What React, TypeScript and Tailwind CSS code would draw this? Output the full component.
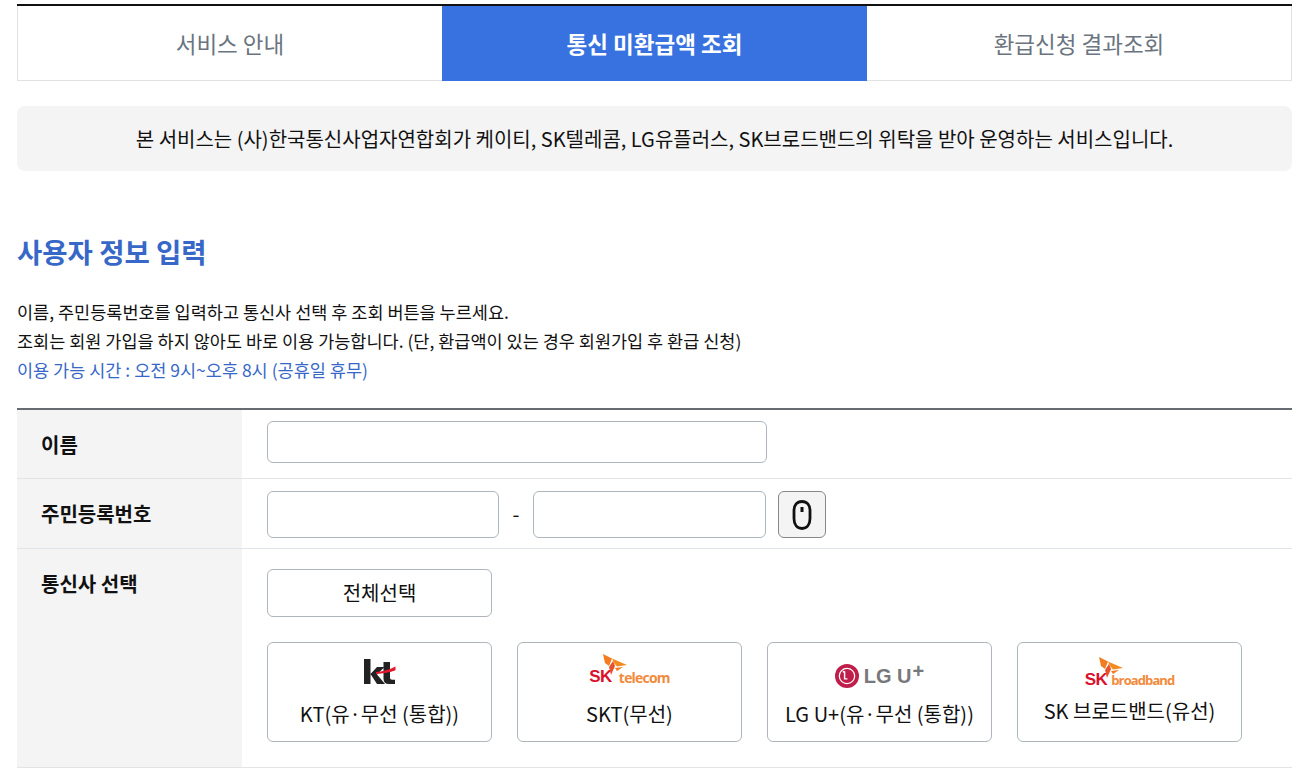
import React from 'react';

const font = { fontFamily: "'Noto Sans CJK KR', 'Noto Sans', sans-serif" };
const logoFont = { fontFamily: "'Liberation Sans', sans-serif" };

function MouseIcon() {
  return (
    <svg width="20" height="30" viewBox="0 0 20 30" fill="none" stroke="#111" strokeWidth="2.8">
      <path d="M10 1.500c5 0 8 3.600 8 9v8c0 6-3 10-8 10s-8-4-8-10v-8c0-5.400 3-9 8-9z" />
      <line x1="10" y1="7" x2="10" y2="12" strokeWidth="3" />
    </svg>
  );
}

function KtLogo() {
  return (
    <svg width="33" height="28" viewBox="0 0 33 28">
      <path d="M1 1h6.500v25H1zM7.500 16 14 9h7.500l-7.500 7.500 8 9.500h-8z" fill="#222" />
      <path d="M20.500 4h6.500v15.500c0 1.500.8 2.200 2.200 2.200H32V26h-6c-3.600 0-5.500-1.800-5.500-5.300z" fill="#222" />
      <path d="M13 14c6.500-.5 13-2.300 19.500-5.500v3.800c-5.500 2.200-12 3.500-19.500 3.700z" fill="#e2182d" />
    </svg>
  );
}

function Wing() {
  return (
    <svg width="25" height="22" viewBox="0 0 25 22">
      <path d="M1 0 10 4.500 7 12 3 9z" fill="#f47b20" />
      <path d="M10 4.500 25 11 15 12.500 12 9z" fill="#f58a1f" />
      <path d="M7 13 11 7 13 12 9 21z" fill="#e9512b" />
      <path d="M13 14 21 13 15 17z" fill="#f47b20" />
    </svg>
  );
}

function SkLogo({ text, textClass }: { text: string; textClass: string }) {
  return (
    <div className="relative flex items-end pt-[16px]">
      <span className="text-[17px] font-black leading-[14px] tracking-[-0.5px] text-[#d9112c]" style={logoFont}>
        SK
      </span>
      <span className={`font-bold leading-[13px] text-[#f28a3c] ${textClass}`} style={{ fontFamily: "'Open Sans', sans-serif" }}>
        {text}
      </span>
      <div className="absolute left-[13px] top-0">
        <Wing />
      </div>
    </div>
  );
}

function LgLogo() {
  return (
    <div className="flex items-center">
      <svg width="24" height="24" viewBox="0 0 25 25">
        <circle cx="12.500" cy="12.500" r="12.500" fill="#bf1e4b" />
        <circle cx="12.500" cy="12.500" r="8" fill="none" stroke="#fff" strokeWidth="1.300" />
        <path d="M10 7.500v8h3" fill="none" stroke="#fff" strokeWidth="1.500" />
        <circle cx="9" cy="8" r="1" fill="#fff" />
      </svg>
      <span className="ml-[5px] text-[20px] font-bold leading-none text-[#77787b]" style={logoFont}>
        LG U
      </span>
      <span className="mb-[10px] ml-[1px] text-[20px] font-bold leading-none text-[#77787b]" style={logoFont}>
        +
      </span>
    </div>
  );
}

const carriers = [
  { label: 'KT(유·무선 (통합))', logo: <KtLogo />, logoClass: 'h-[57px] pt-[15px]' },
  { label: 'SKT(무선)', logo: <SkLogo text="telecom" textClass="ml-[7px] text-[14px] tracking-[-0.8px]" />, logoClass: 'h-[57px] pt-[11px]' },
  { label: 'LG U+(유·무선 (통합))', logo: <LgLogo />, logoClass: 'h-[57px] pt-[18px]' },
  { label: 'SK 브로드밴드(유선)', logo: <SkLogo text="broadband" textClass="ml-[4px] text-[13px] tracking-[-0.9px]" />, logoClass: 'h-[54px] pt-[14px]' },
];

export default function App() {
  return (
    <div className="h-[780px] overflow-hidden bg-white pl-[17px] pr-[11px] pt-1 text-[#111]" style={font}>
      <div className="flex h-[77px] border-t-2 border-[#111]">
        <div className="flex w-[425px] items-center justify-center border-b border-l border-[#e2e2e2] pt-[2px] text-[22.500px] text-[#6b7480]">서비스 안내</div>
        <div className="flex w-[425px] items-center justify-center bg-[#3772e0] pt-[1px] text-[22.500px] font-bold text-white">통신 미환급액 조회</div>
        <div className="flex w-[425px] items-center justify-center border-r border-b border-[#e2e2e2] pt-[2px] text-[22.500px] text-[#6b7480]">환급신청 결과조회</div>
      </div>

      <div className="mt-[25px] flex h-[65px] items-center justify-center rounded-lg bg-[#f4f4f4] text-[20px]">
        본 서비스는 (사)한국통신사업자연합회가 케이티, SK텔레콤, LG유플러스, SK브로드밴드의 위탁을 받아 운영하는 서비스입니다.
      </div>

      <h2 className="mt-[60px] text-[27.500px] font-bold leading-[40px] text-[#3768c8]">사용자 정보 입력</h2>

      <div className="mt-[26px] text-[17.500px] leading-[29px]">
        <p>이름, 주민등록번호를 입력하고 통신사 선택 후 조회 버튼을 누르세요.</p>
        <p>조회는 회원 가입을 하지 않아도 바로 이용 가능합니다. (단, 환급액이 있는 경우 회원가입 후 환급 신청)</p>
        <p className="text-[#3768c8]">이용 가능 시간 : 오전 9시~오후 8시 (공휴일 휴무)</p>
      </div>

      <div className="mt-[24px] border-t-2 border-[#666c72]">
        <div className="flex h-[69px] border-b border-[#e2e5e8]">
          <div className="flex w-[225px] items-center bg-[#f4f4f4] pl-6 pt-[2px] text-[20px] font-bold">이름</div>
          <div className="pl-[25px] pt-[11px]">
            <div className="h-[42px] w-[500px] rounded-md border border-[#adb5bd]" />
          </div>
        </div>
        <div className="flex h-[70px] border-b border-[#e2e5e8]">
          <div className="flex w-[225px] items-center bg-[#f4f4f4] pl-6 text-[20px] font-bold">주민등록번호</div>
          <div className="flex items-start pl-[25px] pt-3">
            <div className="h-[47px] w-[232px] rounded-md border border-[#adb5bd]" />
            <span className="w-[34px] pt-2 text-center text-[20px]">-</span>
            <div className="h-[47px] w-[233px] rounded-md border border-[#adb5bd]" />
            <div className="ml-3 flex h-[47px] w-12 items-center justify-center rounded-md border border-[#888] bg-[#f4f4f4]">
              <MouseIcon />
            </div>
          </div>
        </div>
        <div className="flex h-[219px] border-b border-[#e2e5e8]">
          <div className="w-[225px] bg-[#f4f4f4] pl-6 pt-5 text-[20px] font-bold">통신사 선택</div>
          <div className="pl-[25px] pt-5">
            <div className="flex h-12 w-[225px] items-center justify-center rounded-md border border-[#adb5bd] text-[20px]">전체선택</div>
            <div className="mt-[25px] flex gap-[25px]">
              {carriers.map((c) => (
                <div key={c.label} className="flex h-[100px] w-[225px] flex-col items-center rounded-md border border-[#adb5bd]">
                  <div className={c.logoClass}>{c.logo}</div>
                  <div className="text-[20px] leading-[28px]">{c.label}</div>
                </div>
              ))}
            </div>
          </div>
        </div>
      </div>
    </div>
  );
}
